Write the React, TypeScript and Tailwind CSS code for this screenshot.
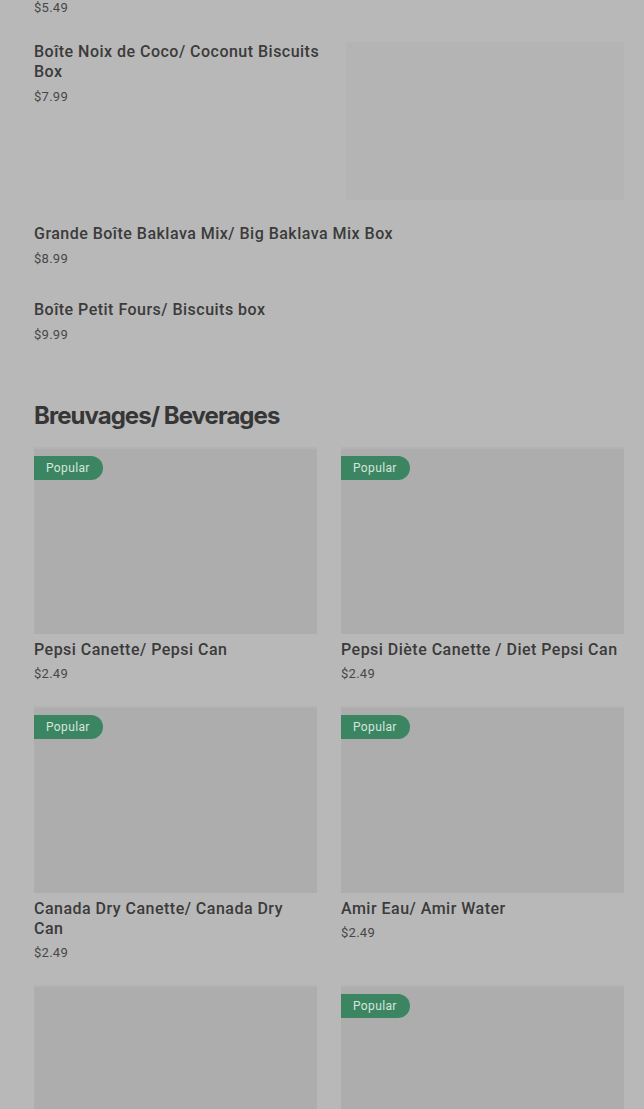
import React from "react";

// ---------------------------------------------------------------------------
// Data
// ---------------------------------------------------------------------------
interface ListItem {
  title: string;
  price: string;
  image?: boolean;
}

interface Drink {
  title: string;
  price: string;
  popular: boolean;
}

const listItems: ListItem[] = [
  { title: "Boîte Noix de Coco/ Coconut Biscuits Box", price: "$7.99", image: true },
  { title: "Grande Boîte Baklava Mix/ Big Baklava Mix Box", price: "$8.99" },
  { title: "Boîte Petit Fours/ Biscuits box", price: "$9.99" },
];

const drinks: Drink[] = [
  { title: "Pepsi Canette/ Pepsi Can", price: "$2.49", popular: true },
  { title: "Pepsi Diète Canette / Diet Pepsi Can", price: "$2.49", popular: true },
  { title: "Canada Dry Canette/ Canada Dry Can", price: "$2.49", popular: true },
  { title: "Amir Eau/ Amir Water", price: "$2.49", popular: true },
  { title: "", price: "", popular: false },
  { title: "", price: "", popular: true },
];

// ---------------------------------------------------------------------------
// Components
// ---------------------------------------------------------------------------
function Price({ value, className = "mt-[5px]" }: { value: string; className?: string }) {
  return (
    <p className={`${className} text-[13px] leading-5 tracking-[0.02em] text-[#474747]`}>{value}</p>
  );
}

function Title({ children }: { children: React.ReactNode }) {
  return (
    <h3 className="text-base font-medium leading-5 tracking-[0.03em] text-[#3b3b3b]">
      {children}
    </h3>
  );
}

function Row({ item }: { item: ListItem }) {
  return (
    <div className="flex gap-6">
      <div className={item.image ? "w-[288px] shrink-0" : "flex-1 pb-[7px]"}>
        <Title>{item.title}</Title>
        <Price value={item.price} />
      </div>
      {item.image && <div className="h-[158px] flex-1 bg-[#b4b4b4]" />}
    </div>
  );
}

function DrinkCard({ drink }: { drink: Drink }) {
  return (
    <div>
      <div className="relative h-[187px] border-t-2 border-[#b3b3b3] bg-[#adadad]">
        {drink.popular && (
          <span className="absolute left-0 top-[7px] rounded-r-full bg-[#3c8562] py-[3px] pl-3 pr-[13px] text-xs leading-[18px] tracking-[0.03em] text-[#d6e6dc]">
            Popular
          </span>
        )}
      </div>
      {drink.title && (
        <div className="mt-[6px] pr-1">
          <Title>{drink.title}</Title>
          <Price value={drink.price} className="mt-[4px]" />
        </div>
      )}
    </div>
  );
}

export default function App() {
  return (
    <div
      className="h-[1109px] overflow-hidden bg-[#b8b8b8] pl-[34px] pr-5"
      style={{ fontFamily: "Roboto, 'Liberation Sans', sans-serif" }}
    >
      {/* tail of the previous item */}
      <div className="-mt-[7px]">
        <Price value="$5.49" />
      </div>

      <div className="mt-6 flex flex-col gap-6">
        {listItems.map((item) => (
          <Row key={item.title} item={item} />
        ))}
      </div>

      <h2 className="mt-[48px] font-['Inter',sans-serif] text-2xl font-bold leading-8 tracking-[-0.04em] text-[#363636]">
        Breuvages/ Beverages
      </h2>

      <div className="mt-[15px] grid grid-cols-2 gap-x-6 gap-y-[22px]">
        {drinks.map((drink, idx) => (
          <DrinkCard key={idx} drink={drink} />
        ))}
      </div>
    </div>
  );
}
